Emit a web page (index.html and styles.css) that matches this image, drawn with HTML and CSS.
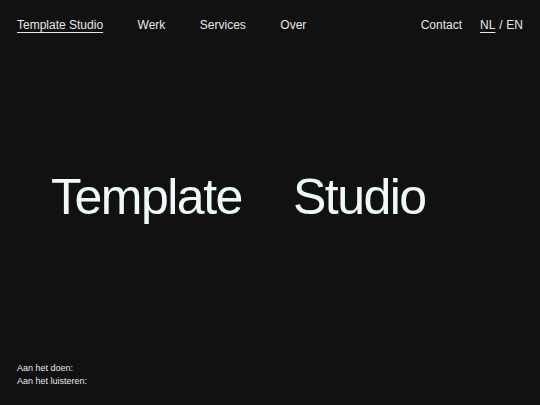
FILE: index.html
```html
<!DOCTYPE html>
<html lang="nl">
<head>
<meta charset="utf-8">
<title>Template Studio</title>
<link rel="stylesheet" href="styles.css">
</head>
<body>
<div class="page">
  <header class="header">
    <nav class="nav-left">
      <a class="nav-link is-active" href="#">Template Studio</a>
      <a class="nav-link" href="#">Werk</a>
      <a class="nav-link" href="#">Services</a>
      <a class="nav-link" href="#">Over</a>
    </nav>
    <nav class="nav-right">
      <a class="nav-link" href="#">Contact</a>
      <div class="lang">
        <a class="nav-link is-active" href="#">NL</a>
        <span class="sep">/</span>
        <a class="nav-link" href="#">EN</a>
      </div>
    </nav>
  </header>
  <main class="hero">
    <h1 class="hero-title"><span>Template</span><span>Studio</span></h1>
  </main>
  <footer class="footer">
    <p>Aan het doen:</p>
    <p>Aan het luisteren:</p>
  </footer>
</div>
</body>
</html>
```
FILE: styles.css
```css
* { box-sizing: border-box; }
html, body {
  margin: 0;
  padding: 0;
  background: #111111;
  color: #e8e8e8;
  font-family: "Liberation Sans", Arial, sans-serif;
}
.page {
  height: 405px;
  display: flex;
  flex-direction: column;
}
.header {
  display: flex;
  justify-content: space-between;
  align-items: flex-start;
  padding: 18px 17px 0 17px;
  font-size: 12px;
  line-height: 14px;
}
.nav-left, .nav-right {
  display: flex;
}
.nav-left { gap: 34.5px; }
.nav-right { gap: 18px; }
.lang { display: flex; gap: 3.8px; }
.nav-link {
  color: #e8e8e8;
  text-decoration: none;
}
.nav-link.is-active {
  text-decoration: underline;
  text-decoration-thickness: 1px;
  text-underline-offset: 3px;
}
.sep { color: #e8e8e8; }
.hero {
  flex: 1;
  display: flex;
  align-items: center;
  padding-left: 51px;
}
.hero-title {
  margin: 0;
  display: flex;
  gap: 51px;
  font-size: 50px;
  line-height: 50px;
  font-weight: 400;
  letter-spacing: -1.5px;
  color: #eefafa;
}
.footer {
  padding: 0 17px 17px 17px;
  font-size: 9px;
  line-height: 13px;
}
.footer p { margin: 0; }
```
